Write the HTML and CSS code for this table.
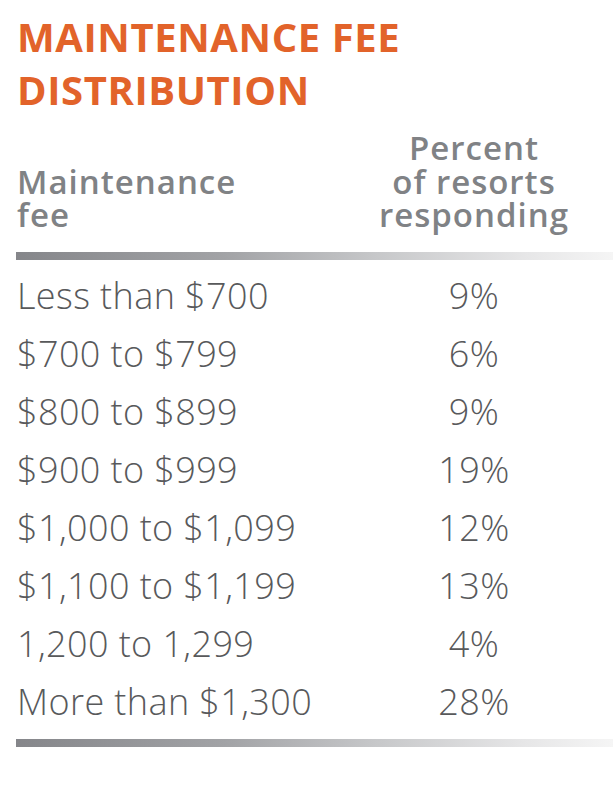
FILE: index.html
```html
<!DOCTYPE html>
<html lang="en">
<head>
<meta charset="utf-8">
<title>Maintenance Fee Distribution</title>
<link rel="stylesheet" href="styles.css">
</head>
<body>
<main class="card">
  <h1 class="title">MAINTENANCE FEE<br>DISTRIBUTION</h1>
  <div class="head">
    <div class="head-left">Maintenance<br>fee</div>
    <div class="head-right">Percent<br>of resorts<br>responding</div>
  </div>
  <div class="rule"></div>
  <div class="rows">
    <div class="row"><span class="fee">Less than $700</span><span class="pct">9%</span></div>
    <div class="row"><span class="fee">$700 to $799</span><span class="pct">6%</span></div>
    <div class="row"><span class="fee">$800 to $899</span><span class="pct">9%</span></div>
    <div class="row"><span class="fee">$900 to $999</span><span class="pct">19%</span></div>
    <div class="row"><span class="fee">$1,000 to $1,099</span><span class="pct">12%</span></div>
    <div class="row"><span class="fee">$1,100 to $1,199</span><span class="pct">13%</span></div>
    <div class="row"><span class="fee">1,200 to 1,299</span><span class="pct">4%</span></div>
    <div class="row"><span class="fee">More than $1,300</span><span class="pct">28%</span></div>
  </div>
  <div class="rule"></div>
</main>
</body>
</html>
```

FILE: styles.css
```css
html, body {
  margin: 0;
  padding: 0;
  background: #ffffff;
}

.card {
  padding: 10px 0 0 16px;
  font-family: "Open Sans", "Liberation Sans", sans-serif;
}

.title {
  margin: 0;
  font-size: 40px;
  line-height: 53px;
  font-weight: 700;
  letter-spacing: 0.6px;
  color: #e2632a;
  padding-left: 1px;
}

.head {
  display: grid;
  grid-template-columns: 319px 1fr;
  align-items: end;
  margin-top: 15px;
  font-size: 33px;
  line-height: 33.5px;
  font-weight: 600;
  letter-spacing: 1px;
  color: #808285;
}

.head-left {
  padding-left: 1px;
}

.head-right {
  text-align: center;
}

.rule {
  height: 8px;
  background: linear-gradient(to right, #85868a 0%, #a2a3a6 35%, #c6c7c9 60%, #e6e6e7 85%, #f5f5f5 100%);
}

.head + .rule {
  margin-top: 20px;
}

.rows {
  padding: 7px 0 8px;
}

.row {
  display: grid;
  grid-template-columns: 319px 1fr;
  font-size: 36px;
  line-height: 58px;
  font-weight: 300;
  letter-spacing: 0.4px;
  color: #58595b;
}

.fee {
  padding-left: 1px;
}

.pct {
  text-align: center;
}
```
